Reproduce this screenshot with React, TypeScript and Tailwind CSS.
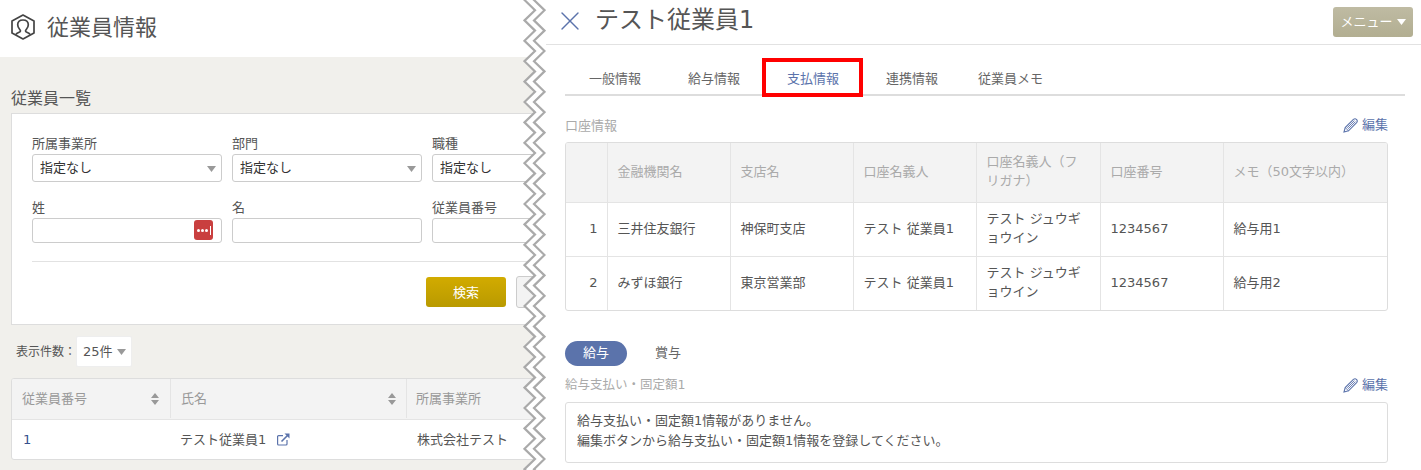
import React from "react";
import { X } from "lucide-react";

const font = { fontFamily: '"DejaVu Sans", "Noto Sans CJK JP", "Noto Sans", sans-serif' };

function Caret({ className = "" }: { className?: string }) {
  return (
    <svg width="9" height="6" viewBox="0 0 9 6" className={className}>
      <path d="M0 0H9L4.5 6Z" fill="currentColor" />
    </svg>
  );
}

function Sort() {
  return (
    <svg width="8" height="12" viewBox="0 0 8 12" className="text-[#999]">
      <path d="M4 0L8 5H0Z M0 7H8L4 12Z" fill="currentColor" />
    </svg>
  );
}

function PersonHex() {
  return (
    <svg width="24" height="26" viewBox="0 0 24 26" fill="none" stroke="#444" strokeWidth="1.7">
      <path d="M12 1L23 7V19L12 25L1 19V7Z" strokeLinejoin="round" />
      <path d="M5 20.5C6 18.5 9.5 18.5 9.5 17C9.5 15.5 6.7 14.5 6.7 10.8C6.7 7.8 9 6 12 6C15 6 17.3 7.8 17.3 10.8C17.3 14.5 14.5 15.5 14.5 17C14.5 18.5 18 18.5 19 20.5" />
    </svg>
  );
}

function PencilIcon() {
  return (
    <svg width="15" height="15" viewBox="0 0 15 15" fill="none" stroke="#5b73ab" strokeWidth="1.1">
      <path d="M1 14L2.2 9.5L10.4 1.4C11.4.6 12.7.6 13.5 1.5C14.4 2.3 14.4 3.6 13.6 4.6L5.5 12.8Z" />
      <path d="M2.2 9.5L5.5 12.8M4.2 9.8L11.4 2.6M5.2 10.8L12.4 3.6" strokeWidth="0.9" />
    </svg>
  );
}

function ExternalIcon() {
  return (
    <svg width="13" height="13" viewBox="0 0 13 13" fill="none" stroke="#5b73ab" strokeWidth="1.2">
      <path d="M6 2.6H1.6C1 2.6.6 3 .6 3.6V11C.6 11.6 1 12 1.6 12H9C9.6 12 10 11.6 10 11V7" />
      <path d="M4.5 8.5L10.5 2.5" strokeWidth="1.6" />
      <path d="M7.5.5H12.5V5.5Z" fill="#5b73ab" stroke="none" />
    </svg>
  );
}

function Field({ label, select, pass }: { label: string; select?: boolean; pass?: boolean }) {
  return (
    <div className="w-[190px]">
      <div className="h-[20px] text-[13px] leading-[22px] text-[#555]">{label}</div>
      <div
        className={`relative mt-px flex items-center rounded-[3px] border border-[#ccc] bg-white pl-[7px] text-[13px] text-[#333] ${
          select ? "h-[28px]" : "h-[25px]"
        }`}
      >
        {select && "指定なし"}
        {select && <Caret className="absolute right-[5px] top-[11px] text-[#999]" />}
        {pass && (
          <span className="absolute right-[8px] top-[1px] flex h-[20px] w-[19px] items-center justify-center gap-px rounded-[3px] bg-[#c93f3f]">
            <span className="h-[3px] w-[3px] rounded-full bg-white" />
            <span className="h-[3px] w-[3px] rounded-full bg-white" />
            <span className="h-[3px] w-[3px] rounded-full bg-white" />
            <span className="ml-px h-[9px] w-px bg-white" />
          </span>
        )}
      </div>
    </div>
  );
}

function LeftPanel() {
  return (
    <div className="h-full w-[535px] shrink-0 overflow-hidden bg-[#f1f0ec]">
      <div className="flex h-[57px] w-[535px] items-center gap-[12px] bg-white pb-[3px] pl-[11px]">
        <PersonHex />
        <span className="text-[22px] text-[#555]">従業員情報</span>
      </div>
      <div className="w-[800px] pl-[11px] pt-[30px]">
        <div className="h-[26px] text-[16px] leading-[24px] text-[#555]">従業員一覧</div>
        <div className="h-[212px] w-[760px] border border-[#ddd] bg-white px-[20px] pt-[19px]">
          <div className="flex gap-[10px]">
            <Field label="所属事業所" select />
            <Field label="部門" select />
            <Field label="職種" select />
          </div>
          <div className="mt-[15px] flex gap-[10px]">
            <Field label="姓" pass />
            <Field label="名" />
            <Field label="従業員番号" />
          </div>
          <div className="mt-[18px] h-px bg-[#e2e2e2]" />
          <div className="mt-[15px] flex gap-[10px] pl-[394px]">
            <button className="h-[30px] w-[80px] rounded-[3px] bg-linear-to-b from-[#d2ab00] to-[#b99a00] pt-px text-[13px] text-white">
              検索
            </button>
            <button className="-mt-px h-[32px] w-[80px] rounded-[3px] border border-[#ccc] bg-[#f3f3f3]" />
          </div>
        </div>
        <div className="mt-[11px] flex h-[31px] items-center pl-[5px] text-[12px] text-[#555]">
          <span className="w-[60px] whitespace-nowrap">表示件数：</span>
          <span className="flex h-[31px] w-[56px] items-center gap-[4px] rounded-[2px] border border-[#eee] bg-white pl-[6px] text-[13px]">
            25件
            <Caret className="text-[#999]" />
          </span>
        </div>
        <div className="mt-[11px] w-[760px] overflow-hidden rounded-[3px] border border-[#ddd] bg-white text-[13px]">
          <div className="flex h-[41px] border-b border-[#e4e4e4] bg-[#f3f3f3] pb-px text-[#999]">
            <div className="flex w-[159px] items-center justify-between border-r border-[#e4e4e4] pl-[10px] pr-[11px]">
              従業員番号
              <Sort />
            </div>
            <div className="flex w-[236px] items-center justify-between border-r border-[#e4e4e4] pl-[10px] pr-[10px]">
              氏名
              <Sort />
            </div>
            <div className="flex items-center pl-[9px]">所属事業所</div>
          </div>
          <div className="flex h-[39px] items-center text-[#555]">
            <div className="w-[159px] pl-[11px] text-[#35508c]">1</div>
            <div className="flex w-[236px] items-center gap-[11px] pl-[9px]">
              テスト従業員1
              <ExternalIcon />
            </div>
            <div className="pl-[10px]">株式会社テスト</div>
          </div>
        </div>
      </div>
    </div>
  );
}

function EditLink() {
  return (
    <span className="flex items-center gap-[4px] text-[13px] text-[#5b73ab]">
      <PencilIcon />
      編集
    </span>
  );
}

const rows = [
  ["1", "三井住友銀行", "神保町支店", "テスト 従業員1", "テスト ジュウギョウイン", "1234567", "給与用1"],
  ["2", "みずほ銀行", "東京営業部", "テスト 従業員1", "テスト ジュウギョウイン", "1234567", "給与用2"],
];
const heads = ["", "金融機関名", "支店名", "口座名義人", "口座名義人（フリガナ）", "口座番号", "メモ（50文字以内）"];

function AccountTable() {
  return (
    <div className="mt-[7px] overflow-hidden rounded-[3px] border border-[#ddd]">
      <table className="w-full table-fixed border-collapse text-[13px] leading-[19px]">
        <colgroup>
          <col className="w-[41px]" />
          <col className="w-[123px]" />
          <col className="w-[123px]" />
          <col className="w-[123px]" />
          <col className="w-[124px]" />
          <col className="w-[123px]" />
          <col />
        </colgroup>
        <thead>
          <tr className="h-[59px] bg-[#f3f3f3] text-[#aaa]">
            {heads.map((h, i) => (
              <th key={i} className="border-b border-l border-[#e4e4e4] pb-[2px] pl-[10px] pr-[11px] text-left font-normal first:border-l-0">
                {h}
              </th>
            ))}
          </tr>
        </thead>
        <tbody>
          {rows.map((r, ri) => (
            <tr key={ri} className="h-[54px] text-[#555]">
              {r.map((c, i) => (
                <td
                  key={i}
                  className={`border-l border-[#e4e4e4] pb-[2px] first:border-l-0 ${ri === 0 ? "border-b" : ""} ${
                    i === 0 ? "pr-[9px] text-right" : "pl-[10px] pr-[11px]"
                  }`}
                >
                  {c}
                </td>
              ))}
            </tr>
          ))}
        </tbody>
      </table>
    </div>
  );
}

function RightPanel() {
  return (
    <div className="h-full min-w-0 flex-1 bg-white">
      <div className="flex h-[45px] items-center border-b border-[#e2e2e2] pl-[19px] pr-[8px]">
        <X size={32} strokeWidth={1} className="mt-[-2px] text-[#5b73ab]" />
        <span className="mb-[4px] ml-[9px] text-[24px] text-[#555]">テスト従業員1</span>
        <button className="ml-auto flex h-[30px] w-[80px] items-center justify-center gap-[4px] rounded-[3px] bg-linear-to-b from-[#bfbba3] to-[#b2ae91] text-[13px] text-white">
          メニュー
          <Caret />
        </button>
      </div>
      <div className="pl-[30px] pr-[33px]">
        <div className="relative mr-[-17px] flex h-[51px] items-center border-b-2 border-[#ddd] pt-[18px] text-[13px] text-[#666]">
          <span className="ml-[24px] w-[99px]">一般情報</span>
          <span className="w-[99px]">給与情報</span>
          <span className="w-[99px] text-[#5b73ab]">支払情報</span>
          <span className="w-[92px]">連携情報</span>
          <span>従業員メモ</span>
          <div className="absolute left-[197px] top-[13px] h-[39px] w-[101px] border-[4px] border-[#ff0000]" />
        </div>
        <div className="w-[823px]">
          <div className="mt-[19px] flex h-[20px] items-center justify-between">
            <span className="pt-[2px] text-[13px] text-[#aaa]">口座情報</span>
            <EditLink />
          </div>
          <AccountTable />
          <div className="mt-[30px] flex h-[25px] items-center text-[13px]">
            <span className="flex h-[25px] w-[62px] items-center justify-center rounded-full bg-[#5b73ab] pb-px text-white">給与</span>
            <span className="mb-px ml-[28px] text-[#666]">賞与</span>
          </div>
          <div className="mt-[9px] flex h-[20px] items-center justify-between">
            <span className="text-[12.5px] text-[#aaa]">給与支払い・固定額1</span>
            <EditLink />
          </div>
          <div className="mt-[7px] h-[61px] rounded-[3px] border border-[#ddd] px-[11px] py-[8px] text-[13px] leading-[20px] text-[#555]">
            <div>給与支払い・固定額1情報がありません。</div>
            <div>編集ボタンから給与支払い・固定額1情報を登録してください。</div>
          </div>
        </div>
      </div>
    </div>
  );
}

function Zigzag() {
  const period = 20.4;
  const left: string[] = [];
  const right: string[] = [];
  for (let i = -1; i < 25; i++) {
    const y = i * period;
    left.push(`1.5,${y}`, `12,${y + period / 2}`);
    right.push(`11,${y}`, `21.5,${y + period / 2}`);
  }
  const band = `${left.join(" ")} 23,${470 + period} 23,${-period}`;
  return (
    <svg width="23" height="470" viewBox="0 0 23 470" className="absolute left-[523px] top-0">
      <polygon points={band} fill="white" />
      <polyline points={left.join(" ")} fill="none" stroke="#aaa" strokeWidth="2.2" />
      <polyline points={right.join(" ")} fill="none" stroke="#aaa" strokeWidth="2.2" />
    </svg>
  );
}

export default function App() {
  return (
    <div style={font} className="relative flex h-[470px] w-[1421px] overflow-hidden bg-white">
      <LeftPanel />
      <RightPanel />
      <Zigzag />
    </div>
  );
}
